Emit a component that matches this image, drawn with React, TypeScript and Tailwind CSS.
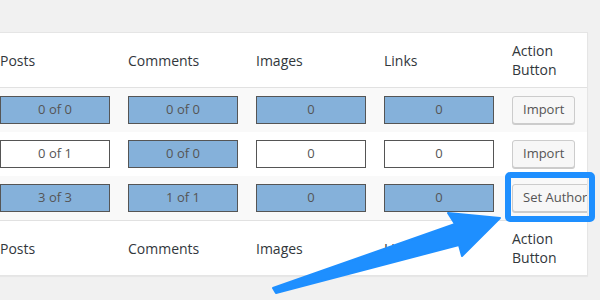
import React from 'react';

type Cell = { text: string; filled: boolean };

const rows: { cells: Cell[]; action: string; striped: boolean }[] = [
  {
    cells: [
      { text: '0 of 0', filled: true },
      { text: '0 of 0', filled: true },
      { text: '0', filled: true },
      { text: '0', filled: true },
    ],
    action: 'Import',
    striped: true,
  },
  {
    cells: [
      { text: '0 of 1', filled: false },
      { text: '0 of 0', filled: true },
      { text: '0', filled: false },
      { text: '0', filled: false },
    ],
    action: 'Import',
    striped: false,
  },
  {
    cells: [
      { text: '3 of 3', filled: true },
      { text: '1 of 1', filled: true },
      { text: '0', filled: true },
      { text: '0', filled: true },
    ],
    action: 'Set Author',
    striped: true,
  },
];

const headings = ['Posts', 'Comments', 'Images', 'Links'];

function HeadRow({ top }: { top?: boolean }) {
  return (
    <div
      className={`grid h-[55px] grid-cols-[128px_128px_128px_128px_1fr] items-center pl-[9px] text-[14px] text-[#32373c] ${
        top ? 'border-b border-[#e1e1e1]' : 'border-t border-[#e1e1e1]'
      }`}
    >
      {headings.map((h) => (
        <div key={h}>{h}</div>
      ))}
      <div className="leading-[19px]">
        Action
        <br />
        Button
      </div>
    </div>
  );
}

export default function App() {
  return (
    <div
      className="relative h-[300px] w-[600px] overflow-hidden bg-[#f1f1f1] pt-[32px]"
      style={{ fontFamily: '"Open Sans", "Noto Sans", sans-serif' }}
    >
      <div className="ml-[-10px] w-[598px] overflow-hidden border border-[#e5e5e5] bg-white shadow-[0_1px_1px_rgba(0,0,0,0.04)]">
        <HeadRow top />
        {rows.map((r, i) => (
          <div
            key={i}
            className={`grid h-[44px] grid-cols-[128px_128px_128px_128px_1fr] items-center pl-[9px] ${
              r.striped ? 'bg-[#f9f9f9]' : 'bg-white'
            }`}
          >
            {r.cells.map((c, j) => (
              <div
                key={j}
                className={`flex h-[28px] w-[110px] items-center justify-center border border-[#555] text-[13px] text-[#555] ${
                  c.filled ? 'bg-[#85b1da]' : 'bg-white'
                }`}
              >
                {c.text}
              </div>
            ))}
            <div className="flex">
              <button className="h-[28px] shrink-0 whitespace-nowrap rounded-[3px] border border-[#cccccc] bg-[#f7f7f7] px-[10px] text-[13px] text-[#555] shadow-[0_1px_0_#cccccc]">
                {r.action}
              </button>
            </div>
          </div>
        ))}
        <HeadRow />
      </div>

      {/* highlight around Set Author */}
      <div className="pointer-events-none absolute left-[505px] top-[172px] h-[50px] w-[90px] rounded-[5px] border-[6px] border-[#1e8fff]" />

      {/* arrow */}
      <svg className="pointer-events-none absolute left-0 top-0" width="600" height="300" viewBox="0 0 600 300">
        <path
          d="M273 288 L455 224 L448 213 L500 218 L462 256 L459 245 L276 293 Z"
          fill="#1e8fff"
          stroke="#1e8fff"
          strokeWidth="2"
          strokeLinejoin="round"
        />
      </svg>
    </div>
  );
}
